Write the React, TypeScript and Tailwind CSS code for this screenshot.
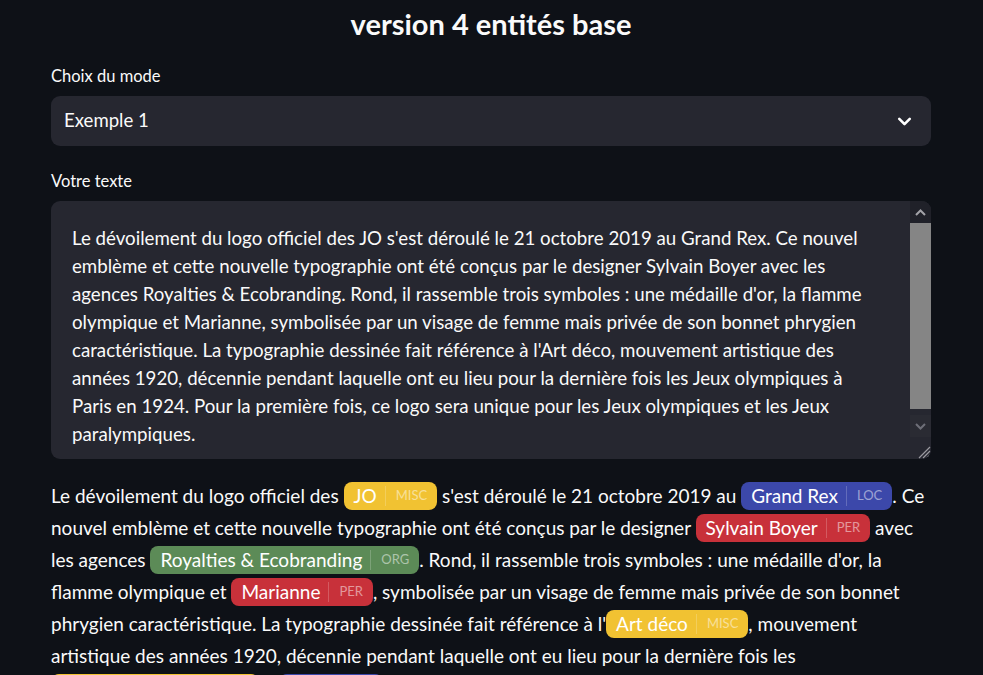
import React from "react";
import { ChevronDown } from "lucide-react";

type Seg = string | { t: string; l: "MISC" | "LOC" | "PER" | "ORG" };

const chipBg: Record<string, string> = {
  MISC: "bg-[#f1c232]",
  LOC: "bg-[#3c48aa]",
  PER: "bg-[#c8313a]",
  ORG: "bg-[#5c8b57]",
};

function Chip({ t, l }: { t: string; l: string }) {
  return (
    <span
      className={`inline-flex h-[28px] items-center rounded-[8px] px-[10px] text-white ${chipBg[l]}`}
    >
      <span>{t}</span>
      <span className="ml-[8px] flex h-[20px] items-center border-l border-white/20 pl-[10px] text-[13px] uppercase text-white/50">
        {l}
      </span>
    </span>
  );
}

const mdLines: Seg[][] = [
  [
    "Le dévoilement du logo officiel des ",
    { t: "JO", l: "MISC" },
    " s'est déroulé le 21 octobre 2019 au ",
    { t: "Grand Rex", l: "LOC" },
    ". Ce",
  ],
  [
    "nouvel emblème et cette nouvelle typographie ont été conçus par le designer ",
    { t: "Sylvain Boyer", l: "PER" },
    " avec",
  ],
  [
    "les agences ",
    { t: "Royalties & Ecobranding", l: "ORG" },
    ". Rond, il rassemble trois symboles : une médaille d'or, la",
  ],
  [
    "flamme olympique et ",
    { t: "Marianne", l: "PER" },
    ", symbolisée par un visage de femme mais privée de son bonnet",
  ],
  [
    "phrygien caractéristique. La typographie dessinée fait référence à l'",
    { t: "Art déco", l: "MISC" },
    ", mouvement",
  ],
  [
    "artistique des années 1920, décennie pendant laquelle ont eu lieu pour la dernière fois les",
  ],
  [
    { t: "Jeux olympiques", l: "MISC" },
    " à ",
    { t: "Paris", l: "LOC" },
    " en 1924. Pour la première fois, ce logo sera unique pour les Jeux olympiques et",
  ],
];

const taLines = [
  "Le dévoilement du logo officiel des JO s'est déroulé le 21 octobre 2019 au Grand Rex. Ce nouvel",
  "emblème et cette nouvelle typographie ont été conçus par le designer Sylvain Boyer avec les",
  "agences Royalties & Ecobranding. Rond, il rassemble trois symboles : une médaille d'or, la flamme",
  "olympique et Marianne, symbolisée par un visage de femme mais privée de son bonnet phrygien",
  "caractéristique. La typographie dessinée fait référence à l'Art déco, mouvement artistique des",
  "années 1920, décennie pendant laquelle ont eu lieu pour la dernière fois les Jeux olympiques à",
  "Paris en 1924. Pour la première fois, ce logo sera unique pour les Jeux olympiques et les Jeux",
  "paralympiques.",
];

export default function App() {
  return (
    <div className="h-[675px] w-full overflow-hidden bg-[#0e1117] font-['Lato',sans-serif] text-[#fafafa]">
      <div className="ml-[51px] flex w-[880px] flex-col">
        <h1 className="mt-[4px] h-[40px] text-center text-[29px] font-bold leading-[40px]">
          version 4 entités base
        </h1>

        <div className="mt-[20px] h-[24px] text-[16.5px] leading-[24px]">Choix du mode</div>
        <div className="mt-[8px] flex h-[50px] items-center justify-between rounded-[9px] bg-[#262730] pl-[13px] pr-[16px]">
          <span className="text-[18.6px]">Exemple 1</span>
          <ChevronDown size={21} strokeWidth={3} className="text-white" />
        </div>

        <div className="mt-[23px] h-[24px] text-[16.5px] leading-[24px]">Votre texte</div>
        <div className="mt-[8px] flex h-[258px] overflow-hidden rounded-[9px] bg-[#262730]">
          <div className="flex-1 pl-[21px] pt-[23px] text-[18.7px] leading-[28px]">
            {taLines.map((l, i) => (
              <div key={i} className="whitespace-pre">
                {l}
              </div>
            ))}
          </div>
          <div className="flex w-[21px] flex-col">
            <div className="flex h-[22px] items-center justify-center bg-[#202129]">
              <svg width="11" height="7" viewBox="0 0 11 7">
                <path d="M1 6 L5.5 1.5 L10 6" stroke="#a3a3a8" strokeWidth="2" fill="none" />
              </svg>
            </div>
            <div className="flex flex-1 flex-col bg-[#262730] pb-[6px]">
              <div className="flex-1 bg-[#858585]" />
            </div>
            <div className="flex h-[22px] items-center justify-center bg-[#2a2b33]">
              <svg width="11" height="7" viewBox="0 0 11 7">
                <path d="M1 1 L5.5 5.5 L10 1" stroke="#6e6f78" strokeWidth="2" fill="none" />
              </svg>
            </div>
            <div className="flex h-[22px] items-end justify-end bg-[#262730]">
              <svg width="14" height="14" viewBox="0 0 14 14">
                <path d="M13 2 L2 13 M13 6 L6 13 M13 10 L10 13" stroke="#9a9aa0" strokeWidth="1.2" />
              </svg>
            </div>
          </div>
        </div>

        <div className="mt-[21px] text-[19px]">
          {mdLines.map((line, i) => (
            <div key={i} className="flex h-[32px] items-center whitespace-pre">
              {line.map((s, j) =>
                typeof s === "string" ? (
                  <span key={j}>{s}</span>
                ) : (
                  <Chip key={j} t={s.t} l={s.l} />
                )
              )}
            </div>
          ))}
        </div>
      </div>
    </div>
  );
}
